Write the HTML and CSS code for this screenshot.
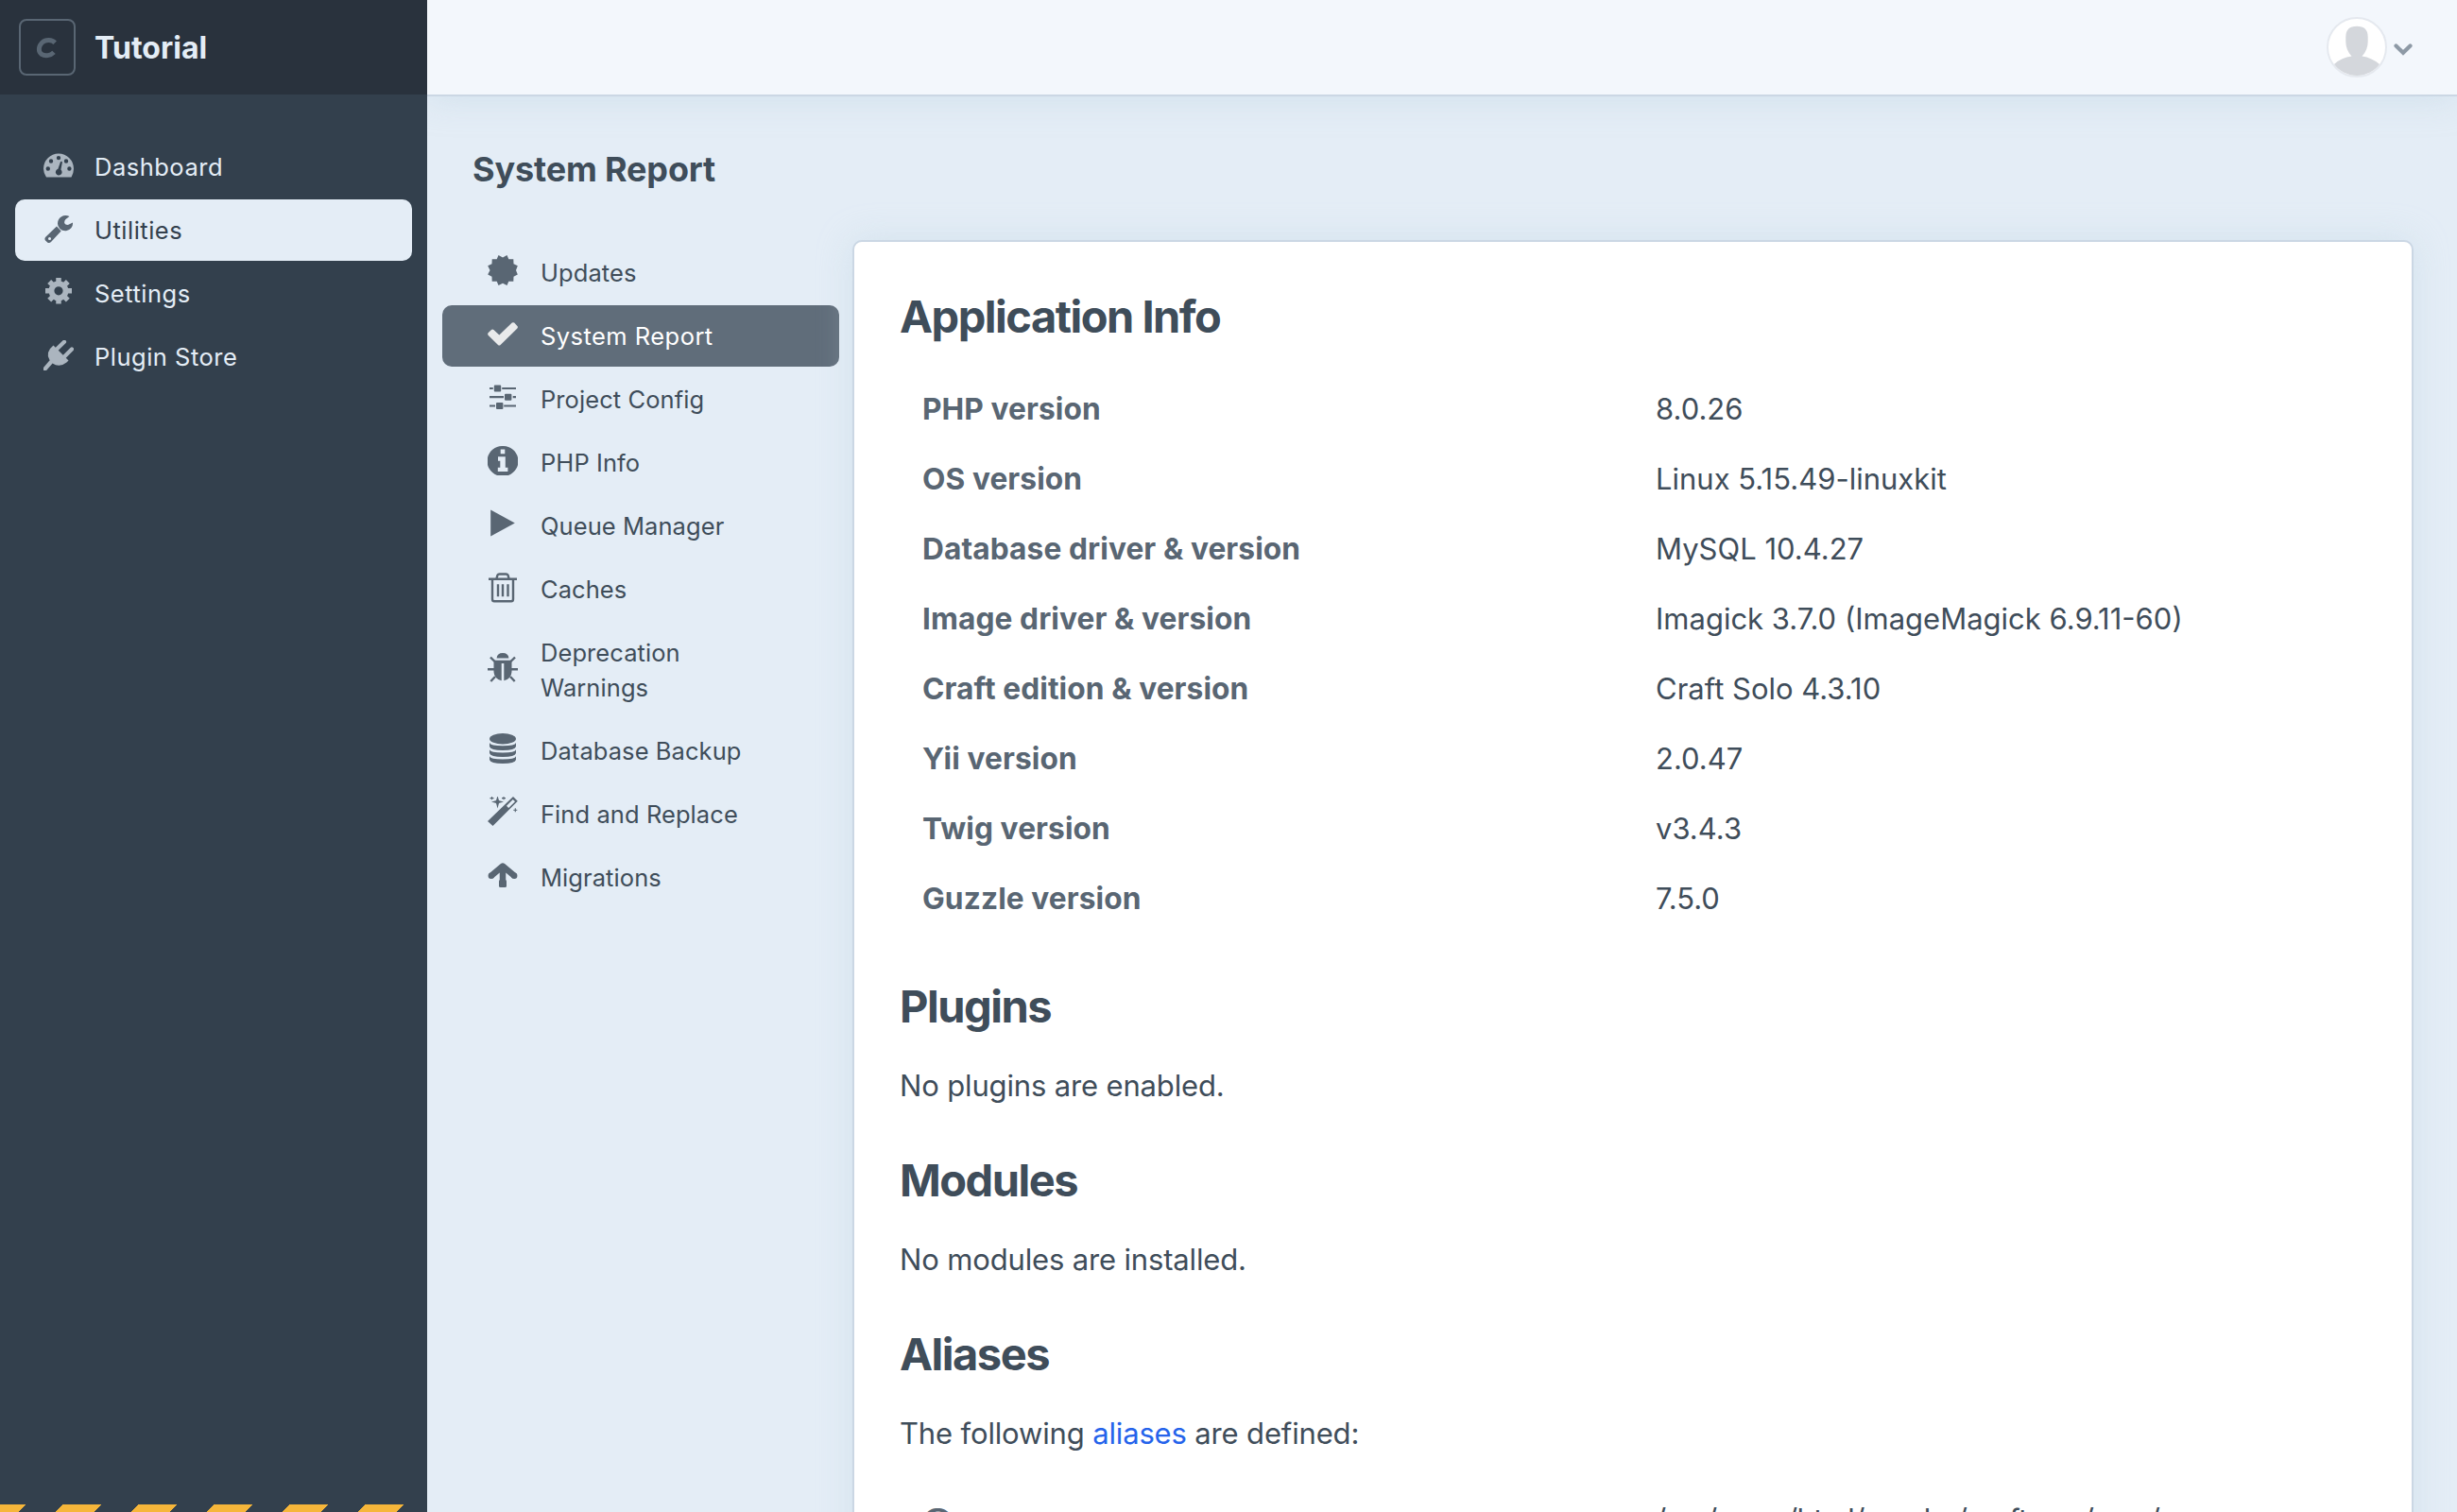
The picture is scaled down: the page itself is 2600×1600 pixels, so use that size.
FILE: index.html
```html
<!DOCTYPE html>
<html lang="en">
<head>
<meta charset="utf-8">
<title>System Report - Tutorial</title>
<link rel="stylesheet" href="styles.css">
</head>
<body>
<div class="app">
  <aside class="sidebar">
    <div class="brand">
      <div class="brand-icon"><svg viewBox="0 0 60 60"><path d="M38.200 25.200C35 21.900 28.500 21.400 24.600 25C20.500 28.900 20.200 34.800 24 37.400C27.700 39.800 33.500 39 37 35.400" fill="none" stroke="#596673" stroke-width="4.900"/></svg></div>
      <div class="brand-name">Tutorial</div>
    </div>
    <nav class="main-nav">
      <a class="nav-item"><svg class="icon" viewBox="0 0 32 32"><path fill-rule="evenodd" d="M3 28.400Q0 24 0 19.500A16 16 0 0 1 32 19.500Q32 24 29.500 28.400ZM16 5.900a2.200 2.200 0 1 0 0 4.400a2.200 2.200 0 1 0 0-4.400ZM8 9.300a2.200 2.200 0 1 0 0 4.400a2.200 2.200 0 1 0 0-4.400ZM24 9.300a2.200 2.200 0 1 0 0 4.400a2.200 2.200 0 1 0 0-4.400ZM4.800 17.300a2.200 2.200 0 1 0 0 4.400a2.200 2.200 0 1 0 0-4.400ZM27.400 17.300a2.200 2.200 0 1 0 0 4.400a2.200 2.200 0 1 0 0-4.400ZM18 12.200L15.400 19.800A3.400 3.400 0 1 0 18.400 20.500L19.900 12.700Q19.300 11.200 18 12.200Z"/></svg><span>Dashboard</span></a>
      <a class="nav-item active"><svg class="icon" viewBox="0 0 32 32"><path fill-rule="evenodd" d="M27.500 2.900A8.500 8.500 0 0 0 15 10.500Q14.900 13.500 17.300 16Q20 18.700 24 18.300A8 8 0 0 0 31 9.500L26.500 11.800Q23.300 12.300 22.300 10.300Q21.700 8 23.500 6ZM14 13.500L18.700 18.500L8 30Q6.500 31.700 4.500 30.800L2 28.500Q.7 26.500 2.300 24.700ZM6.500 25a1.500 1.500 0 1 0 0 3a1.500 1.500 0 1 0 0-3Z"/></svg><span>Utilities</span></a>
      <a class="nav-item"><svg class="icon" viewBox="0 0 32 32"><path fill="none" stroke="currentColor" stroke-width="5.500" d="M16 1V6M16 23.500V28.500M2 14.800H7M25 14.800H30M6.200 5L9.700 8.500M22.300 21.100L25.800 24.600M6.200 24.600L9.700 21.100M22.300 8.500L25.800 5"/><path fill-rule="evenodd" d="M16 4.300a10.500 10.500 0 1 0 0 21a10.500 10.500 0 1 0 0-21ZM16 10.200a4.600 4.600 0 1 1 0 9.200a4.600 4.600 0 1 1 0-9.200Z"/></svg><span>Settings</span></a>
      <a class="nav-item"><svg class="icon" viewBox="0 0 32 32"><path d="M10.500 5.500L26.500 21.500L24.500 23.500Q17 29.500 9.500 24.500Q1.500 16.500 7 9Z"/><path d="M14 9.500L22 1.800M22 17.500L30 9.500M8 23L1.500 30.500" fill="none" stroke="currentColor" stroke-width="4.200" stroke-linecap="round"/></svg><span>Plugin Store</span></a>
    </nav>
    <div class="hazard"></div>
  </aside>

  <div class="page">
    <header class="topbar">
      <svg class="avatar" viewBox="0 0 64 64"><circle cx="32" cy="32" r="31" fill="#fff" stroke="#e5e9ef" stroke-width="2"/><path d="M32 9.700Q20.300 9.700 20.300 21V26Q20.300 35 26.500 41.500Q16 42.500 8 50A30 30 0 0 0 56 50Q48 43 37.500 41.500Q43.700 35 43.700 26V21Q43.700 9.700 32 9.700Z" fill="#d4d7dc"/></svg>
      <svg class="chevron" viewBox="0 0 20 14"><path d="M2.500 2.500L10 9.800L17.500 2.500" fill="none" stroke="#8e9aa6" stroke-width="4.200" stroke-linecap="round"/></svg>
    </header>
    <h1 class="page-title">System Report</h1>
    <div class="columns">
      <nav class="tools">
        <a class="tool"><svg class="icon raised" viewBox="0 0 32 32"><path d="M16 2.500L20.500 0L22.300 4.200L27.300 4.200L27.500 9.200L31.800 11.300L30 16L31.800 20.600L27.500 22.800L27.300 27.800L22.300 27.800L20.500 32L16 29.700L11.500 32L9.700 27.800L4.700 27.800L4.500 22.800L.2 20.600L2.500 16L.2 11.300L4.500 9.200L4.700 4.200L9.700 4.200L11.500 0Z"/></svg><span>Updates</span></a>
        <a class="tool active"><svg class="icon" viewBox="0 0 32 32"><path d="M.6 14.300L4 10.900Q5.200 10 6.400 10.900L12.300 16.600L25.800 3.600Q27 2.700 28.200 3.600L31.400 7Q32.400 8.200 31.400 9.400L13.600 26.900Q12.300 28 11 26.900L.6 16.700Q-.3 15.500 .6 14.300Z"/></svg><span>System Report</span></a>
        <a class="tool"><svg class="icon" viewBox="0 0 32 32"><path d="M2 6H30M2 15.200H30M2 24.500H30" fill="none" stroke="currentColor" stroke-width="2.200"/><path class="halo" d="M5.800 2h9.400v8H5.800ZM17 11.200h9.700v8H17ZM8 20.500h9.200v8H8Z"/><path d="M7.800 2.500h5.400a1 1 0 0 1 1 1v5a1 1 0 0 1-1 1h-5.400a1 1 0 0 1-1-1v-5a1 1 0 0 1 1-1ZM19 11.700h5.400a1 1 0 0 1 1 1v5a1 1 0 0 1-1 1h-5.400a1 1 0 0 1-1-1v-5a1 1 0 0 1 1-1ZM10 21h5.400a1 1 0 0 1 1 1v5a1 1 0 0 1-1 1h-5.400a1 1 0 0 1-1-1v-5a1 1 0 0 1 1-1Z"/></svg><span>Project Config</span></a>
        <a class="tool"><svg class="icon" viewBox="0 0 32 32"><path fill-rule="evenodd" d="M16 0A16 16 0 0 0 10 31H22A16 16 0 0 0 16 0ZM13.700 3.500h4.600v4.700h-4.600ZM11 11.300h7.800v11.500h2.600v4.300H10.800v-4.300h2.500v-7H11Z"/></svg><span>PHP Info</span></a>
        <a class="tool"><svg class="icon" viewBox="0 0 32 32"><path d="M3.200 .5L28.800 14.500L3.200 28.500Z"/></svg><span>Queue Manager</span></a>
        <a class="tool"><svg class="icon" viewBox="0 0 32 32"><path d="M1 6.700H31M5 8V28Q5 30.300 7 30.300H25Q27 30.300 27 28V8M9.500 6L10.500 2.500Q11 1.500 12.500 1.500H19.500Q21 1.500 21.500 2.500L22.500 6M11 12.300V25.300M16 12.300V25.300M21.500 12.300V25.300" fill="none" stroke="currentColor" stroke-width="2.400"/></svg><span>Caches</span></a>
        <a class="tool"><svg class="icon raised" viewBox="0 0 32 32"><path d="M9.600 6.500Q10 1 16 1T22.400 6.500Z"/><path fill-rule="evenodd" d="M6.500 8.800H25.500V21Q25 28.500 17.300 30.300V12H14.700V30.300Q7 28.500 6.500 21Z"/><path d="M3 5.500L7.500 10M29 5.500L24.500 10M0 18.300H7M25 18.300H32M3.300 31L8 26M28.700 31L24 26" fill="none" stroke="currentColor" stroke-width="2.400"/></svg><span>Deprecation Warnings</span></a>
        <a class="tool"><svg class="icon raised" viewBox="0 0 32 32"><ellipse cx="16" cy="5.700" rx="14" ry="5.700"/><path d="M2 10Q3 13.200 16 13.200T30 10V14Q29 18 16 18T2 14ZM2 17.200Q3 20.400 16 20.400T30 17.200V21Q29 25 16 25T2 21ZM2 24.300Q3 27.500 16 27.500T30 24.300V28Q29 32 16 32T2 28Z"/></svg><span>Database Backup</span></a>
        <a class="tool"><svg class="icon raised" viewBox="0 0 32 32"><path fill-rule="evenodd" d="M27 0L31.800 4.700L5.500 31L0 26ZM26.800 3L20 9.800L22.200 12L29 5.200Z"/><path d="M10.500 1L11.500 4.500L15 5.500L11.500 6.500L10.500 10.300L9.500 6.500L6 5.500L9.500 4.500ZM4.500 0V3.200M2.500 1.600H6.500M17 0V3.200M15 1.600H19M29.300 12.200V16.200M27.300 14.200H31.300" stroke="currentColor" stroke-width="1.100"/></svg><span>Find and Replace</span></a>
        <a class="tool"><svg class="icon" viewBox="0 0 32 32"><path d="M3.500 16L16 5.500L28.500 16M16 6V25.500" fill="none" stroke="currentColor" stroke-width="6.500" stroke-linejoin="round" stroke-linecap="butt"/><circle cx="3.800" cy="15.700" r="3.200"/><circle cx="28.200" cy="15.700" r="3.200"/><rect x="12" y="20" width="8" height="8" rx="1.500"/></svg><span>Migrations</span></a>
      </nav>
      <main class="card">
        <h2>Application Info</h2>
        <table class="info">
          <tr><th>PHP version</th><td>8.0.26</td></tr>
          <tr><th>OS version</th><td>Linux 5.15.49-linuxkit</td></tr>
          <tr><th>Database driver &amp; version</th><td>MySQL 10.4.27</td></tr>
          <tr><th>Image driver &amp; version</th><td>Imagick 3.7.0 (ImageMagick 6.9.11-60)</td></tr>
          <tr><th>Craft edition &amp; version</th><td>Craft Solo 4.3.10</td></tr>
          <tr><th>Yii version</th><td>2.0.47</td></tr>
          <tr><th>Twig version</th><td>v3.4.3</td></tr>
          <tr><th>Guzzle version</th><td>7.5.0</td></tr>
        </table>
        <h2>Plugins</h2>
        <p>No plugins are enabled.</p>
        <h2>Modules</h2>
        <p>No modules are installed.</p>
        <h2>Aliases</h2>
        <p class="lead">The following <a class="link">aliases</a> are defined:</p>
        <table class="info">
          <tr><th>@app</th><td class="path">/var/www/html/vendor/craftcms/cms/src</td></tr>
        </table>
      </main>
    </div>
  </div>
</div>
</body>
</html>
```
FILE: styles.css
```css
* { box-sizing: border-box; }
html, body { margin: 0; height: 100%; overflow: hidden; }
body {
  font-family: Inter, "Liberation Sans", sans-serif;
  font-size: 31px;
  color: #3f4d5a;
  background: #e4edf6;
}
.app { display: flex; height: 1600px; overflow: hidden; }
.sidebar {
  position: relative;
  z-index: 1;
  display: flex;
  flex-direction: column;
  flex: 0 0 452px;
  background: #33404d;
  color: #e4edf6;
}
.brand {
  display: flex;
  align-items: center;
  gap: 20px;
  height: 100px;
  padding-left: 20px;
  background: #29323d;
}
.brand-icon {
  width: 60px;
  height: 60px;
  border: 2px solid #596673;
  border-radius: 8px;
}
.brand-icon svg { display: block; width: 60px; height: 60px; margin: -2px; }
.brand-name { padding-top: 2px; font-size: 32px; font-weight: 700; line-height: 44px; }
.main-nav { display: flex; flex-direction: column; gap: 2px; padding: 44px 16px 0; }
.nav-item, .tool {
  display: flex;
  align-items: center;
  min-height: 65px;
  border-radius: 10px;
  font-size: 25.5px;
  line-height: 37px;
}
.nav-item { padding-left: 30px; gap: 22px; letter-spacing: 0.5px; }
.icon { flex: none; width: 32px; height: 32px; fill: currentColor; color: #abb5bf; margin-top: -4px; }
.icon.raised { margin-top: -6px; }
.nav-item.active { background: #e4edf6; color: #33404d; }
.nav-item.active .icon { color: #596673; }
.hazard {
  height: 8px;
  margin-top: auto;
  background: repeating-linear-gradient(135deg, #f6b63a 0 19.6px, #33404d 19.6px 46.7px, #f6b63a 46.7px 56.57px);
}
.page { flex: 1; min-width: 0; }
.topbar {
  display: flex;
  justify-content: flex-end;
  align-items: center;
  gap: 7px;
  height: 102px;
  padding-right: 47px;
  background: #f3f7fc;
  border-bottom: 2px solid #cbd7e4;
  box-shadow: 0 0 36px rgba(185, 210, 225, 0.5);
}
.avatar { width: 64px; height: 64px; }
.chevron { width: 20px; height: 14px; margin-top: 5px; }
.page-title { margin: 52px 0 0 48px; font-size: 36px; line-height: 50px; font-weight: 700; letter-spacing: -0.15px; }
.columns { display: flex; gap: 14px; padding: 50px 46px 0 16px; }
.tools { display: flex; flex-direction: column; gap: 2px; flex: 0 0 420px; padding-top: 2px; }
.tool { padding: 14px 90px 14px 48px; gap: 24px; letter-spacing: 0.07px; }
.tool .icon { color: #596673; }
.tool .halo { fill: #e4edf6; }
.tool.active { background: #606d7a; color: #fff; letter-spacing: 0.45px; }
.tool.active .icon { color: #e9eaeb; }
.card {
  flex: 1;
  height: 1500px;
  padding: 47px 48px;
  background: #fff;
  border: 2px solid #cbd7e4;
  border-radius: 10px;
  box-shadow: 0 0 36px rgba(185, 210, 225, 0.4);
}
h2 { margin: 0; font-size: 47px; line-height: 64px; font-weight: 650; letter-spacing: -1.5px; }
p { margin: 30px 0 46px; line-height: 44px; letter-spacing: -0.15px; }
.lead { margin-bottom: 32px; }
.info { width: 100%; margin: 29px 0 45px; border-spacing: 0; table-layout: fixed; line-height: 40px; }
.info th, .info td { height: 74px; padding: 0 24px; text-align: left; }
.info th { width: 776px; font-size: 31.7px; font-weight: 700; letter-spacing: 0.08px; color: #596673; }
.info .path { letter-spacing: -0.6px; }
.link { color: #2563eb; }
```
